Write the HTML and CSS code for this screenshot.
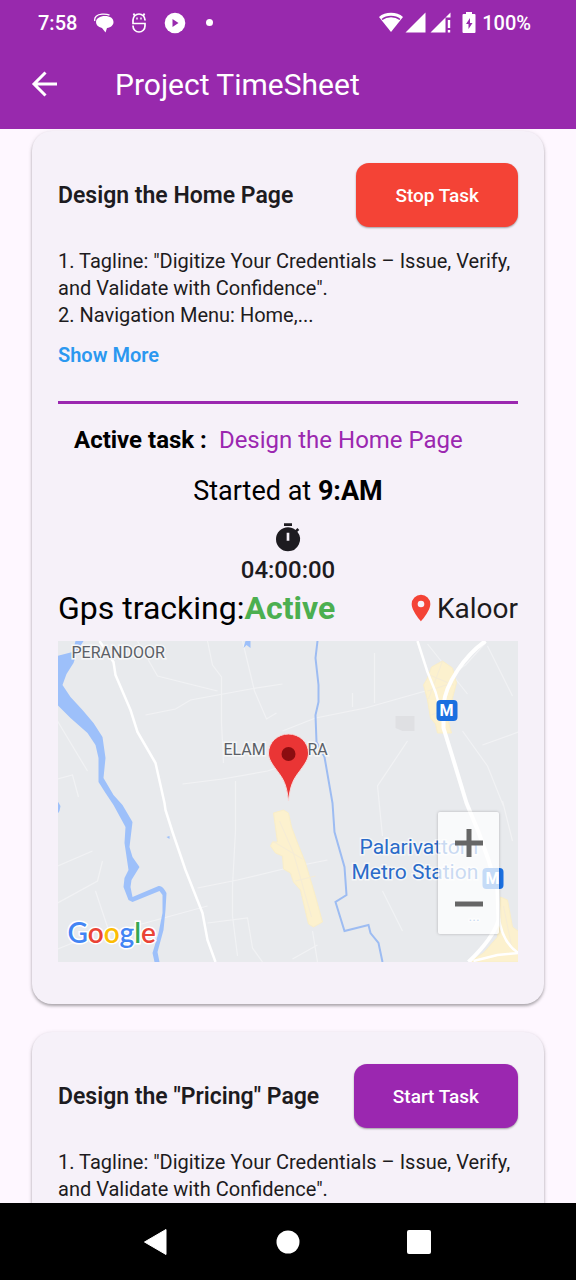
FILE: index.html
```html
<!DOCTYPE html>
<html lang="en">
<head>
<meta charset="utf-8">
<meta name="viewport" content="width=device-width, initial-scale=1">
<title>Project TimeSheet</title>
<link rel="stylesheet" href="styles.css">
</head>
<body>
<header class="top">
  <div class="status">
    <div class="status-left">
      <span>7:58</span>
      <svg width="20" height="20" viewBox="0 0 20 20"><path d="M.8 8C0 4 3 1.500 8 1.200c3-.2 5.500 0 7.500 1" fill="none" stroke="#fff" stroke-width="1.300"/><path d="M11 3c5 0 8.500 2.300 8.500 6 0 3.200-2.500 5.300-6.500 6l-1.500 4.500L8 15C4 14 2 12 2 9c0-3.500 4-6 9-6z" fill="#fff"/></svg>
      <svg width="16" height="22" viewBox="0 0 16 22" fill="none" stroke="#fff" stroke-width="1.700"><path d="M14 8.500V8A6 6 0 0 0 2 8v3.500h12V14a6 6 0 0 1-12 0v-.5M3.500 3.500 2.500 1.500M12.500 3.500l1-2"/><path d="M6 5.500v2M10 5.500v2" stroke-width="1.400"/></svg>
      <svg width="22" height="22" viewBox="0 0 22 22"><circle cx="11" cy="11" r="10.300" fill="#fff"/><path d="m8.500 7 6 4-6 4z" fill="#9829ad"/></svg>
      <i class="dot"></i>
    </div>
    <div class="status-right">
      <svg width="24" height="22" viewBox="0 0 24 22"><path d="M0 5C6-.6 18-.6 24 5L12 20z" fill="#fff"/><path d="M3 7.500C8 3.500 16 3.500 21 7.500" fill="none" stroke="#9829ad" stroke-width="1.600"/></svg>
      <svg width="21" height="22" viewBox="0 0 21 22"><path d="M20.500.5v20H.5z" fill="#fff"/></svg>
      <svg class="signal" width="21" height="22" viewBox="0 0 21 22"><path d="M20.500.5v5h-5v15H.5zM17.800 8h2.400v8h-2.400zM17.800 18h2.400v2.500h-2.400z" fill="#fff"/></svg>
      <svg class="battery" width="14" height="22" viewBox="0 0 14 22"><path d="M4 0h6v2h2.500q1 0 1 1v17q0 1-1 1h-11q-1 0-1-1V3q0-1 1-1H4z" fill="#fff"/><path d="M8 6v5h2.500L6.500 17v-5H4z" fill="#9829ad"/></svg>
      <span>100%</span>
    </div>
  </div>
  <div class="appbar">
    <button class="back" aria-label="Back"><svg width="28" height="28" viewBox="0 0 28 28"><path d="M27 14H4.500M15.500 2.500 4 14l11.500 11.500" fill="none" stroke="#fff" stroke-width="3"/></svg></button>
    <h1>Project TimeSheet</h1>
  </div>
</header>

<main class="list">
  <article class="card">
    <div class="card-head">
      <h2>Design the Home Page</h2>
      <button class="action stop">Stop Task</button>
    </div>
    <p class="desc">1. Tagline: "Digitize Your Credentials – Issue, Verify, and Validate with Confidence".<br>2. Navigation Menu: Home,...</p>
    <button class="more">Show More</button>
    <hr>
    <p class="active-task"><b>Active task :</b><span>Design the Home Page</span></p>
    <p class="started">Started at <b>9:AM</b></p>
    <div class="timer">
      <svg width="32" height="32" viewBox="0 0 24 24" fill="#1d1b20"><path d="M9 1h6v2H9zM19.030 7.390l1.420-1.420c-.43-.51-.9-.99-1.410-1.410l-1.420 1.420C16.070 4.740 14.120 4 12 4a9 9 0 0 0 0 18 9 9 0 0 0 7.030-14.610zM13 14h-2V8h2z"/></svg>
      <span>04:00:00</span>
    </div>
    <div class="gps">
      <p>Gps tracking:<b>Active</b></p>
      <div class="place"><svg width="32" height="32" viewBox="0 0 24 24"><path d="M12 2a7 7 0 0 0-7 7c0 5.250 7 13 7 13s7-7.750 7-13a7 7 0 0 0-7-7zm0 9.500a2.500 2.500 0 1 1 0-5 2.500 2.500 0 0 1 0 5z" fill="#f44336"/></svg><span>Kaloor</span></div>
    </div>
    <div class="map">
      <svg class="map-canvas" viewBox="0 0 461 321" preserveAspectRatio="xMidYMid slice" role="img" aria-label="Map of Elamakkara">
        <rect width="461" height="321" fill="#e8eaed"/>
        <g fill="none" stroke="#f1f2f4" stroke-width="1.200">
          <path d="M150 0l5 24 9 12v46l2 40M185 0l12 50 12 28 10-6M88 74l30-6 15-9 60-11 32-5M125 143l40-5 45-8 25-8M178 140v50l-3 55v30l5 40M0 225l35-15M0 262l40-22 5-20M38 250l15 45M140 247l40-8 50-12 40-8M150 282l40-5 5 30 10 14M0 138l15-4 6 22M225 90l33-13 50-10 60-17 40-26 20-22M317 12v50M295 52v14M430 5l25 50M405 90l25 35 16 40M425 104l36-13M370 3l40 50M325 250l20 40M350 100l-30 45 5 50M255 290l5 31M235 318l25-14M40 295l110-30M445 160l10 40M80 0l20 35 60 15M0 80l30 50M0 308l20-8"/>
        </g>
        <path d="M338 75h19v15h-12l-7-3z" fill="#dfe0e3"/>
        <g fill="#fcf1ce" stroke="#f9eec9" stroke-width="1">
          <path d="M385 20l10 7 4 15-4 15-5 20 4 15h-14l-2-9-5-6-3-18-4-15 4-7 4-11z"/>
          <path d="M216 172l10-3 5 3 3 14 6 16 8 20 9 30 8 29-9 5-5-3-8-34-7-8-3-9-7-4-1-13-7-3-5-7 2-4h5z"/>
          <path d="M443 256l7 3 5 27 7 5v30h-50l14-9 14-16z"/>
        </g>
        <g fill="none" stroke="#f5ecd6" stroke-width="1"><path d="M372 34l24 10M370 50l25-8M385 20l-14 38M374 74l16-6M222 180l14 32 18 64M215 200l30 18M238 240l20-5M446 265l8 40"/></g>
        <path d="M0 15L15 11 18 0H26L20 10 16 22 9 33 5 44 13 56 25 69 36 82 45 96 48 117 46 137 56 154 65 164 75 181 72 206 75 216 82 226 74 239 73 246 75 256 101 245Q105 244 109 252L108 269 106 289 100 311 102 321H97L95 312 101 292 105 272V254L102 250 75 261 71 259 66 246 67 237 71 229 67 202 68 186 56 164 48 152 41 141V117L38 104 30 92 13 77 0 64z" fill="#9dc0fa"/>
        <path d="M0 160l3 5-1 5-2 3zM188 0h5v7l-4-3-3 3zM109 196l3-1v3z" fill="#9dc0fa"/>
        <path d="M260 0L258 17 261 44V61L258 74 259 101 267 116 275 162 277 191 287 226 289 254 278 261 287 290 311 284 313 292 321 302 325 321" fill="none" stroke="#9dbcf2" stroke-width="2"/>
        <g fill="none" stroke="#fff" stroke-linejoin="round">
          <path d="M42 0L56 21 58 34 73 69 80 91 98 122 107 162 108 169 115 191 128 229 145 272 150 299 158 321" stroke-width="2.500"/>
          <path d="M360 0l10 31 8 20 7 25" stroke-width="2.500"/>
          <path d="M428 0C408 14 388 42 386 64V87L395 116 409 162 421 191 431 219 440 249 441 279Q436 297 411 321" stroke-width="4"/>
          <path d="M441 275c2 15 7 29 20 37l-21 2-24 6" stroke-width="2.500"/>
        </g>
        <g class="place-label"><text x="14" y="17">PERANDOOR</text><text x="166" y="114">ELAM</text><text x="250" y="114">RA</text></g>
        <g class="station"><text x="302" y="213">Palarivattom</text><text x="294" y="238">Metro Station</text><text class="ellipsis" x="411" y="280">...</text></g>
        <g class="metro"><rect x="379" y="59" width="21" height="21" rx="4"/><text x="389" y="75">M</text><rect x="425" y="227" width="21" height="21" rx="4"/><text x="435" y="243">M</text></g>
        <path d="M231 160c-2-17-5-22-12-31-5-7-8-11-8-17a20 19 0 0 1 40 0c0 6-3 10-8 17-7 9-10 14-12 31z" fill="#ea3535" stroke="#f6dada" stroke-width="1"/>
        <circle cx="231" cy="113" r="7" fill="#8b0d10"/>
        <text class="google" x="10" y="302"><tspan fill="#4285f4">G</tspan><tspan fill="#ea4335">o</tspan><tspan fill="#fbbc04">o</tspan><tspan fill="#4285f4">g</tspan><tspan fill="#34a853">l</tspan><tspan fill="#ea4335">e</tspan></text>
      </svg>
      <div class="zoom">
        <button aria-label="Zoom in"><svg width="28" height="28" viewBox="0 0 28 28"><path d="M14 0v28M0 14h28" stroke="#666" stroke-width="5"/></svg></button>
        <button aria-label="Zoom out"><svg width="28" height="28" viewBox="0 0 28 28"><path d="M0 14h28" stroke="#666" stroke-width="5"/></svg></button>
      </div>
    </div>
  </article>

  <article class="card">
    <div class="card-head">
      <h2>Design the "Pricing" Page</h2>
      <button class="action start">Start Task</button>
    </div>
    <p class="desc">1. Tagline: "Digitize Your Credentials – Issue, Verify, and Validate with Confidence".</p>
  </article>
</main>

<nav class="navbar">
  <button aria-label="Back"><svg width="26" height="28" viewBox="0 0 26 28"><path d="M22 1.500v25L.5 14z" fill="#fff" stroke="#fff" stroke-linejoin="round"/></svg></button>
  <button aria-label="Home"><svg width="26" height="28" viewBox="0 0 26 28"><circle cx="13" cy="14" r="11.500" fill="#fff"/></svg></button>
  <button aria-label="Recents"><svg width="26" height="28" viewBox="0 0 26 28"><rect x="1" y="2" width="24" height="24" rx="2" fill="#fff"/></svg></button>
</nav>
</body>
</html>
```

FILE: styles.css
```css
* { box-sizing: border-box; }
body {
  margin: 0;
  height: 100vh;
  display: flex;
  flex-direction: column;
  background: #fef7ff;
  color: #1d1b20;
  font-family: Roboto, "Liberation Sans", sans-serif;
}
h1, h2, p { margin: 0; }
button { border: 0; padding: 0; background: none; font: inherit; color: inherit; cursor: pointer; }
svg { display: block; flex: none; }

.top { flex: none; background: #9829ad; color: #fff; }
.status {
  display: flex;
  justify-content: space-between;
  padding: 0 45px 0 38px;
  height: 45px;
  align-items: center;
  font-size: 20px;
  font-weight: 500;
}
.status-left, .status-right { display: flex; align-items: center; }
.status-left { gap: 17px; }
.status-right { gap: 2px; }
.signal { margin-left: 2px; }
.battery { margin: 0 4px 0 9px; }
.dot { width: 7px; height: 7px; margin-left: 3px; border-radius: 50%; background: #fff; }
.appbar { display: flex; align-items: center; height: 84px; padding: 0 30px 6px; gap: 57px; }
.appbar h1 { font-size: 30px; font-weight: 400; }

.list {
  flex: 1;
  min-height: 0;
  display: flex;
  flex-direction: column;
  gap: 28px;
  padding: 2px 32px 0;
  overflow: auto;
  scrollbar-width: none;
}
.card {
  flex: none;
  padding: 32px 26px 42px;
  border-radius: 20px;
  background: #f6f1f9;
  box-shadow: 0 2px 3px rgba(0, 0, 0, .28), 0 1px 5px rgba(0, 0, 0, .1);
}
.card-head { display: flex; align-items: center; justify-content: space-between; }
.card-head h2 { font-size: 23px; font-weight: 600; }
.action {
  height: 64px;
  padding: 0 39px;
  border-radius: 13px;
  color: #fff;
  font-size: 19px;
  font-weight: 500;
  box-shadow: 0 1px 2px rgba(0, 0, 0, .35);
}
.stop { background: #f44336; }
.start { background: #9b27b0; }
.desc { margin-top: 21px; font-size: 20px; line-height: 27px; }
.more { display: block; margin-top: 13px; line-height: 27px; font-size: 20px; font-weight: 600; color: #2b98f0; }
hr { height: 3px; margin: 32px 0 21px; border: 0; background: #9b27b0; }
.active-task { display: flex; gap: 12px; padding-left: 16px; font-size: 24px; line-height: 30px; color: #9b27b0; }
.active-task b { color: #000; }
.started { margin-top: 19px; text-align: center; font-size: 27px; line-height: 34px; color: #000; }
.timer {
  display: flex;
  flex-direction: column;
  align-items: center;
  margin-top: 14px;
  font-size: 24px;
  font-weight: 500;
  line-height: 32px;
}
.gps { display: flex; align-items: center; justify-content: space-between; margin-top: 3px; }
.gps p { font-size: 32px; line-height: 38px; color: #000; }
.gps b { color: #4caf50; }
.place { display: flex; align-items: center; font-size: 28px; }

.map { position: relative; margin-top: 14px; }
.map-canvas { width: 100%; height: 321px; }
.place-label { font-size: 16px; fill: #5b6066; stroke: #f5f6f7; stroke-width: 3px; paint-order: stroke; }
.station { font-size: 21px; fill: #2a6bc9; stroke: #f5f6f7; stroke-width: 3px; paint-order: stroke; }
.ellipsis { font-size: 14px; }
.metro { fill: #1a6fe0; }
.metro text { fill: #fff; font-size: 16px; font-weight: 700; text-anchor: middle; }
.google { font-family: Lato, sans-serif; font-size: 28px; font-weight: 600; stroke: #fff; stroke-width: 3px; paint-order: stroke; }
.zoom {
  position: absolute;
  right: 19px;
  bottom: 28px;
  display: grid;
  background: rgba(255, 255, 255, .75);
  box-shadow: 0 0 3px rgba(0, 0, 0, .25);
  border-radius: 2px;
}
.zoom button { display: grid; place-items: center; width: 61px; height: 61px; }

.navbar {
  flex: none;
  display: flex;
  justify-content: center;
  align-items: center;
  gap: 105px;
  height: 77px;
  background: #000;
}
```
